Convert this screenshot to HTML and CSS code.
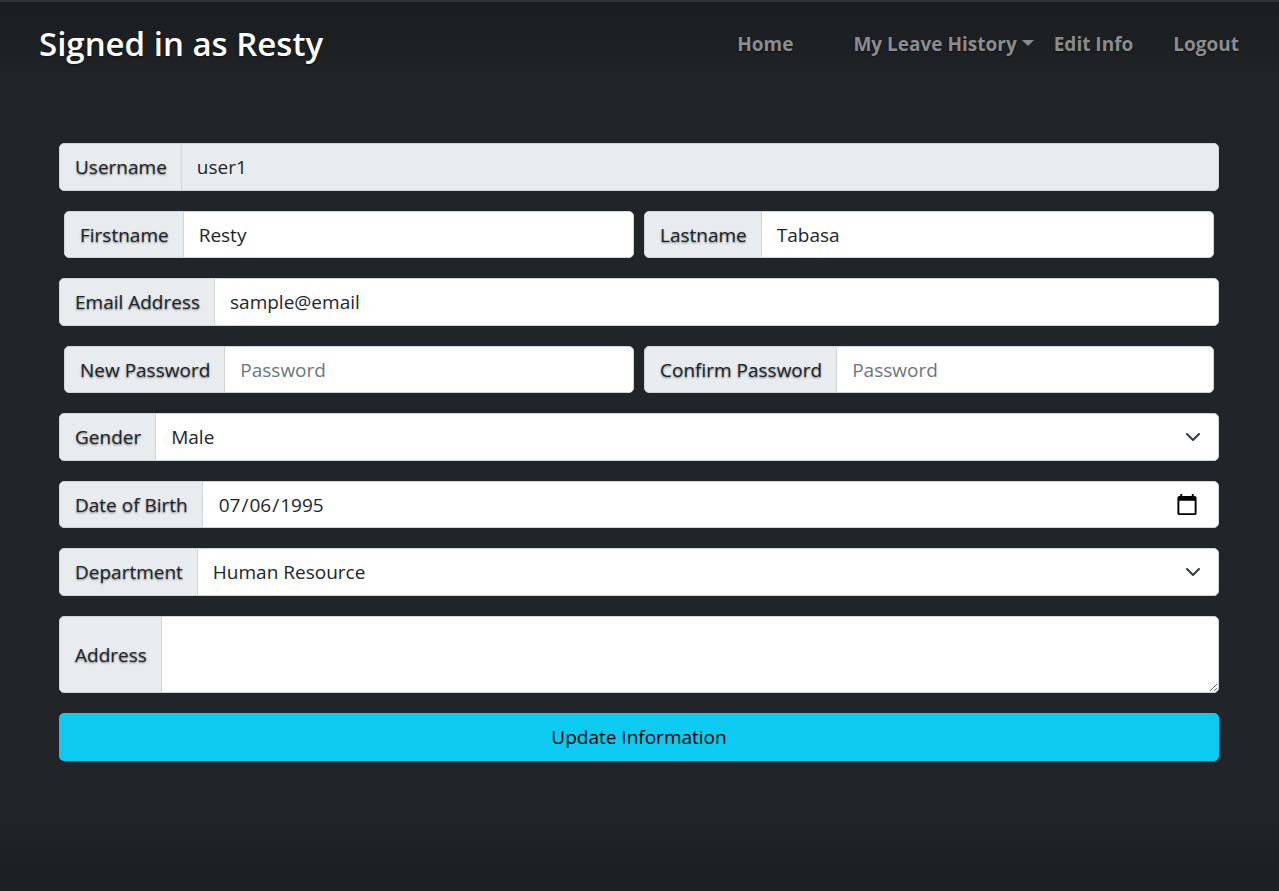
FILE: index.html
```html
<!DOCTYPE html>
<html lang="en">
<head>
<meta charset="utf-8">
<meta name="viewport" content="width=device-width, initial-scale=1">
<title>Edit Info</title>
<link rel="stylesheet" href="styles.css">
</head>
<body>
<header class="masthead">
  <h3 class="brand">Signed in as Resty</h3>
  <nav class="nav">
    <a class="nav-link nav-home" href="#">Home</a>
    <a class="nav-link dropdown" href="#">My Leave History<span class="caret"></span></a>
    <a class="nav-link nav-edit" href="#">Edit Info</a>
    <a class="nav-link" href="#">Logout</a>
  </nav>
</header>
<main class="content">
  <form class="form">
    <div class="group">
      <label class="tag" for="username">Username</label>
      <input class="field" id="username" type="text" value="user1" readonly>
    </div>
    <div class="pair">
      <div class="group compact">
        <label class="tag" for="firstname">Firstname</label>
        <input class="field" id="firstname" type="text" value="Resty">
      </div>
      <div class="group compact">
        <label class="tag" for="lastname">Lastname</label>
        <input class="field" id="lastname" type="text" value="Tabasa">
      </div>
    </div>
    <div class="group">
      <label class="tag" for="email">Email Address</label>
      <input class="field" id="email" type="text" value="sample@email">
    </div>
    <div class="pair">
      <div class="group compact">
        <label class="tag" for="password">New Password</label>
        <input class="field" id="password" type="password" placeholder="Password">
      </div>
      <div class="group compact">
        <label class="tag" for="confirm">Confirm Password</label>
        <input class="field" id="confirm" type="password" placeholder="Password">
      </div>
    </div>
    <div class="group">
      <label class="tag" for="gender">Gender</label>
      <div class="select-wrap">
        <select class="field select" id="gender"><option>Male</option><option>Female</option></select>
        <svg class="chevron" viewBox="0 0 16 16" aria-hidden="true"><path d="m2 5 6 6 6-6"/></svg>
      </div>
    </div>
    <div class="group compact">
      <label class="tag" for="birth">Date of Birth</label>
      <input class="field date" id="birth" type="date" value="1995-07-06">
    </div>
    <div class="group">
      <label class="tag" for="department">Department</label>
      <div class="select-wrap">
        <select class="field select" id="department"><option>Human Resource</option></select>
        <svg class="chevron" viewBox="0 0 16 16" aria-hidden="true"><path d="m2 5 6 6 6-6"/></svg>
      </div>
    </div>
    <div class="group">
      <label class="tag" for="address">Address</label>
      <textarea class="field area" id="address" rows="2"></textarea>
    </div>
    <button class="submit" type="submit">Update Information</button>
  </form>
</main>
</body>
</html>
```
FILE: styles.css
```css
* {
  box-sizing: border-box;
}

body {
  margin: 0;
  min-height: 100vh;
  border-top: 2px solid #2f3136;
  background: linear-gradient(#1a1d1f, #212529 96px, #212529 calc(100% - 96px), #1c1f21);
  color: #fff;
  font: 400 19px/28px "Segoe UI", "Open Sans", "Noto Sans", sans-serif;
  text-shadow: 0 1px 2px rgba(0, 0, 0, 0.5);
}

.masthead {
  display: flex;
  justify-content: space-between;
  align-items: center;
  padding: 19px 40px 21px 39px;
}

.brand {
  margin: 0;
  font-size: 33px;
  line-height: 46px;
  font-weight: 600;
}

.nav {
  display: flex;
  align-items: center;
}

.nav-link {
  color: #8b8c8e;
  font-weight: 700;
  text-decoration: none;
}

.nav-home {
  margin-right: 60px;
}

.dropdown {
  margin-right: 20px;
}

.nav-edit {
  margin-right: 40px;
}

.caret {
  display: inline-block;
  margin-left: 5px;
  vertical-align: 5px;
  border-top: 6px solid;
  border-right: 6px solid transparent;
  border-left: 6px solid transparent;
}

.content {
  padding: 55px 60px 60px 59px;
}

.form {
  display: flex;
  flex-direction: column;
  gap: 20px;
}

.pair {
  display: grid;
  grid-template-columns: 1fr 1fr;
  gap: 10px;
  padding: 0 5px;
}

.group {
  display: flex;
  min-height: 48px;
  min-width: 0;
}

.compact {
  min-height: 47px;
}

.tag {
  display: flex;
  align-items: center;
  padding: 0 14px 0 15px;
  border: 1px solid #ced4da;
  border-radius: 5px 0 0 5px;
  background: #e9ecef;
  color: #212529;
  white-space: nowrap;
}

.field {
  flex: 1;
  min-width: 0;
  margin: 0 0 0 -1px;
  padding: 0 15px;
  border: 1px solid #ced4da;
  border-radius: 0 5px 5px 0;
  background: #fff;
  color: #212529;
  font: inherit;
  text-shadow: none;
  appearance: none;
}

.field:read-only:not(select) {
  background: #e9ecef;
}

.field::placeholder {
  color: #6c757d;
}

.select-wrap {
  display: grid;
  flex: 1;
  align-items: center;
}

.select-wrap > * {
  grid-area: 1 / 1;
}

.select {
  align-self: stretch;
}

.chevron {
  justify-self: end;
  width: 16px;
  height: 16px;
  margin-right: 18px;
  fill: none;
  stroke: #343a40;
  stroke-width: 2;
  stroke-linecap: round;
  stroke-linejoin: round;
  pointer-events: none;
}

.date::-webkit-datetime-edit {
  padding: 0;
}

.date::-webkit-calendar-picker-indicator {
  width: 24px;
  height: 24px;
  padding: 0;
  margin-right: 4px;
}

.area {
  min-height: 77px;
  padding: 8px 15px;
  resize: vertical;
}

.submit {
  min-height: 48px;
  padding: 0 15px;
  border: 0;
  border-radius: 5px;
  background: #0dcaf0;
  color: #000;
  font: inherit;
}
```
